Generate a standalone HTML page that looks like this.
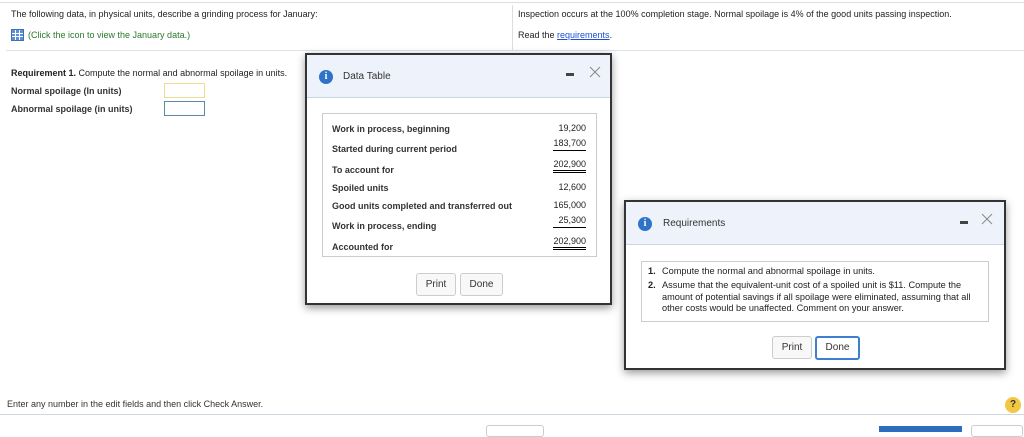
<!DOCTYPE html>
<html><head><style>
body{margin:0;width:1024px;height:429px;overflow:hidden;background:#fff;font-family:"Liberation Sans",Arial,sans-serif;color:#222;position:relative}
.a{position:absolute;white-space:nowrap}
.t9{font-size:9px}
.b{font-weight:bold}
.dlg{position:absolute;background:#fff;border:2px solid #333;box-shadow:0 3px 8px rgba(0,0,0,.4)}
.hd{position:absolute;left:0;right:0;top:0;background:#eef3fb;border-bottom:1px solid #c9d6e6}
.ic{position:absolute;width:14px;height:14px;border-radius:50%;background:#2f73c8;color:#fff;font:bold 10px "Liberation Serif",serif;text-align:center;line-height:14px}
.btn{position:absolute;border:1px solid #ccc;border-radius:3px;background:#f8f8f8;font-size:10px;text-align:center;color:#333}
.num{position:absolute;right:10px;font-size:9px;text-align:right}
.lbl{position:absolute;left:9px;font-size:9px;font-weight:bold;color:#333}
</style></head><body>
<div class="a" style="left:0;right:0;top:2px;border-top:1px solid #ddd"></div>
<div class="a t9" style="left:11px;top:9px">The following data, in physical units, describe a grinding process for January:</div>
<div class="a" style="left:11px;top:29px;width:11px;height:10px;background:#5b8fd6;border:1px solid #3e6fb8;background-image:linear-gradient(90deg,transparent 3px,#fff 3px,#fff 4px,transparent 4px,transparent 7px,#fff 7px,#fff 8px,transparent 8px),linear-gradient(transparent 3px,#fff 3px,#fff 4px,transparent 4px,transparent 6px,#fff 6px,#fff 7px,transparent 7px)"></div>
<div class="a t9" style="left:28px;top:30px;color:#2b7a2b">(Click the icon to view the January data.)</div>
<div class="a" style="left:512px;top:5px;height:45px;border-left:1px solid #ddd"></div>
<div class="a t9" style="left:518px;top:9px">Inspection occurs at the 100% completion stage. Normal spoilage is 4% of the good units passing inspection.</div>
<div class="a t9" style="left:518px;top:30px">Read the <span style="color:#1a4fd6;text-decoration:underline">requirements</span>.</div>
<div class="a" style="left:6px;right:0;top:50px;border-top:1px solid #dde3ea"></div>
<div class="a t9" style="left:11px;top:68px"><b>Requirement 1.</b> Compute the normal and abnormal spoilage in units.</div>
<div class="a t9 b" style="left:11px;top:86px;color:#333">Normal spoilage (In units)</div>
<div class="a t9 b" style="left:11px;top:104px;color:#333">Abnormal spoilage (in units)</div>
<div class="a" style="left:164px;top:83px;width:39px;height:13px;border:1px solid #f0dc90"></div>
<div class="a" style="left:164px;top:101px;width:39px;height:13px;border:1px solid #5a8aa5"></div>

<div class="dlg" style="left:305px;top:53px;width:303px;height:248px">
 <div class="hd" style="height:42px"></div>
 <div class="ic" style="left:12px;top:15px">i</div>
 <div class="a" style="left:36px;top:16px;font-size:10px;color:#333">Data Table</div>
 <div class="a" style="left:259px;top:18px;width:8px;height:3px;background:#444"></div>
 <svg class="a" style="left:282px;top:11px" width="12" height="12"><path d="M1 1L11 11M11 1L1 11" stroke="#888" stroke-width="1"/></svg>
 <div class="a" style="left:15px;top:58px;width:273px;height:142px;border:1px solid #ccc">
  <div class="lbl" style="top:10px">Work in process, beginning</div><div class="num" style="top:9px">19,200</div>
  <div class="lbl" style="top:30px">Started during current period</div><div class="num" style="top:24px;border-bottom:1px solid #000;width:33px;padding-bottom:2px">183,700</div>
  <div class="lbl" style="top:51px">To account for</div><div class="num" style="top:45px;border-bottom:3px double #000;width:33px;padding-bottom:1px">202,900</div>
  <div class="lbl" style="top:69px">Spoiled units</div><div class="num" style="top:68px">12,600</div>
  <div class="lbl" style="top:87px">Good units completed and transferred out</div><div class="num" style="top:86px">165,000</div>
  <div class="lbl" style="top:107px">Work in process, ending</div><div class="num" style="top:101px;border-bottom:1px solid #000;width:33px;padding-bottom:2px">25,300</div>
  <div class="lbl" style="top:128px">Accounted for</div><div class="num" style="top:122px;border-bottom:3px double #000;width:33px;padding-bottom:1px">202,900</div>
 </div>
 <div class="btn" style="left:109px;top:218px;width:38px;height:21px;line-height:21px">Print</div>
 <div class="btn" style="left:153px;top:218px;width:41px;height:21px;line-height:21px">Done</div>
</div>

<div class="dlg" style="left:624px;top:200px;width:378px;height:166px">
 <div class="hd" style="height:42px"></div>
 <div class="ic" style="left:12px;top:15px">i</div>
 <div class="a" style="left:37px;top:16px;font-size:10px;color:#333">Requirements</div>
 <div class="a" style="left:334px;top:19px;width:8px;height:3px;background:#444"></div>
 <svg class="a" style="left:355px;top:11px" width="12" height="12"><path d="M1 1L11 11M11 1L1 11" stroke="#888" stroke-width="1"/></svg>
 <div class="a" style="left:15px;top:59px;width:346px;height:59px;border:1px solid #ccc;font-size:9.2px;line-height:11.5px">
  <div style="position:absolute;left:6px;top:4px"><b>1.</b></div><div style="position:absolute;left:20px;top:4px">Compute the normal and abnormal spoilage in units.</div>
  <div style="position:absolute;left:6px;top:18px"><b>2.</b></div><div style="position:absolute;left:20px;top:18px">Assume that the equivalent-unit cost of a spoiled unit is $11. Compute the<br>amount of potential savings if all spoilage were eliminated, assuming that all<br>other costs would be unaffected. Comment on your answer.</div>
 </div>
 <div class="btn" style="left:146px;top:134px;width:38px;height:21px;line-height:21px">Print</div>
 <div class="btn" style="left:189px;top:134px;width:41px;height:20px;line-height:20px;border:2px solid #3d7fd1;background:#fff">Done</div>
</div>

<div class="a t9" style="left:7px;top:399px;color:#333">Enter any number in the edit fields and then click Check Answer.</div>
<div class="a" style="left:0;right:0;top:414px;border-top:1px solid #cfd8e0"></div>
<div class="a" style="left:1005px;top:397px;width:16px;height:16px;border-radius:50%;background:#f2c744;color:#333;font:bold 10px sans-serif;text-align:center;line-height:16px">?</div>
<div class="a" style="left:486px;top:425px;width:56px;height:10px;border:1px solid #ccc;border-radius:3px"></div>
<div class="a" style="left:879px;top:426px;width:83px;height:6px;background:#2a6ebd"></div>
<div class="a" style="left:971px;top:425px;width:50px;height:10px;border:1px solid #ccc;border-radius:3px"></div>
</body></html>
